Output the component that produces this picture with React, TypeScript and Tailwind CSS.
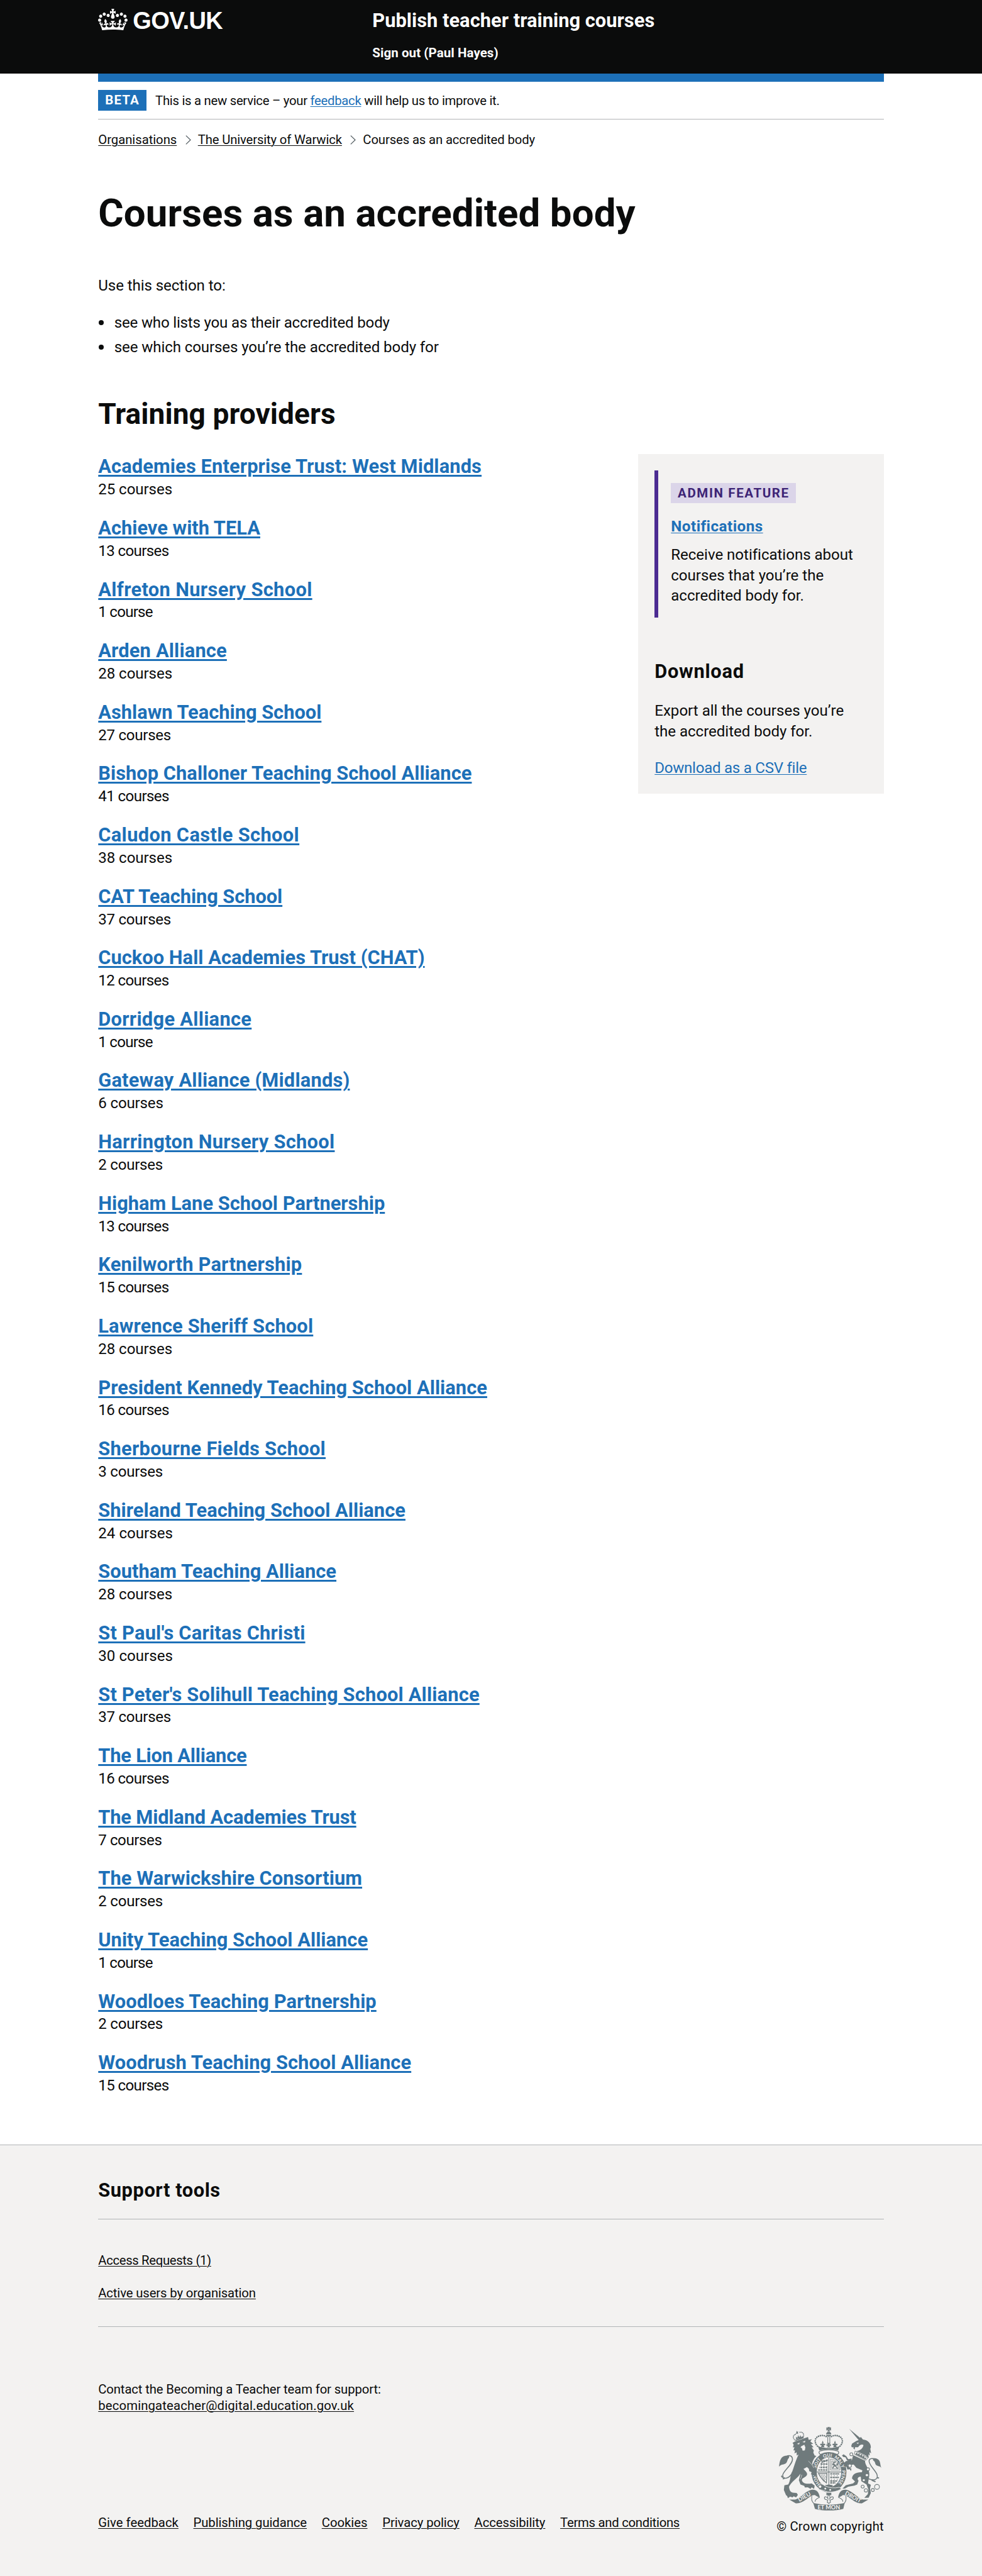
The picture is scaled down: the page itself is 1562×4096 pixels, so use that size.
import React, { useLayoutEffect, useRef, useState } from 'react'

type FitProps = { width: number; className?: string; children: React.ReactNode }

/** One line of text whose tracking is adjusted so that it sets to a fixed measure. */
function Fit({ width, className = '', children }: FitProps) {
  const ref = useRef<HTMLSpanElement>(null)
  const [spacing, setSpacing] = useState<number | null>(null)

  useLayoutEffect(() => {
    const el = ref.current
    if (!el || spacing !== null) return
    const natural = el.getBoundingClientRect().width
    setSpacing((width - natural) / (el.textContent ?? ' ').length)
  }, [width, spacing])

  return (
    <span
      ref={ref}
      className={'whitespace-nowrap [font-variant-ligatures:none] ' + className}
      style={spacing === null ? undefined : { letterSpacing: spacing + 'px' }}
    >
      {children}
    </span>
  )
}

const providers: { name: string; courses: number; width: number }[] = [
  { name: 'Academies Enterprise Trust: West Midlands', courses: 25, width: 609.8 },
  { name: 'Achieve with TELA', courses: 13, width: 257.7 },
  { name: 'Alfreton Nursery School', courses: 1, width: 340.4 },
  { name: 'Arden Alliance', courses: 28, width: 204.6 },
  { name: 'Ashlawn Teaching School', courses: 27, width: 355.1 },
  { name: 'Bishop Challoner Teaching School Alliance', courses: 41, width: 594.2 },
  { name: 'Caludon Castle School', courses: 38, width: 319.9 },
  { name: 'CAT Teaching School', courses: 37, width: 292.9 },
  { name: 'Cuckoo Hall Academies Trust (CHAT)', courses: 12, width: 519.3 },
  { name: 'Dorridge Alliance', courses: 1, width: 244 },
  { name: 'Gateway Alliance (Midlands)', courses: 6, width: 400.2 },
  { name: 'Harrington Nursery School', courses: 2, width: 376.2 },
  { name: 'Higham Lane School Partnership', courses: 13, width: 456 },
  { name: 'Kenilworth Partnership', courses: 15, width: 324.1 },
  { name: 'Lawrence Sheriff School', courses: 28, width: 342 },
  { name: 'President Kennedy Teaching School Alliance', courses: 16, width: 618.7 },
  { name: 'Sherbourne Fields School', courses: 3, width: 361.8 },
  { name: 'Shireland Teaching School Alliance', courses: 24, width: 488.7 },
  { name: 'Southam Teaching Alliance', courses: 28, width: 378.8 },
  { name: "St Paul's Caritas Christi", courses: 30, width: 329.3 },
  { name: "St Peter's Solihull Teaching School Alliance", courses: 37, width: 606.5 },
  { name: 'The Lion Alliance', courses: 16, width: 236.2 },
  { name: 'The Midland Academies Trust', courses: 7, width: 410.4 },
  { name: 'The Warwickshire Consortium', courses: 2, width: 419.8 },
  { name: 'Unity Teaching School Alliance', courses: 1, width: 428.9 },
  { name: 'Woodloes Teaching Partnership', courses: 2, width: 442.5 },
  { name: 'Woodrush Teaching School Alliance', courses: 15, width: 497.9 },
]

const countWidths: Record<number, number> = {
  1: 86.6, 2: 102.8, 3: 102.8, 6: 103.5, 7: 101.2, 12: 112.2, 13: 112.2, 15: 112.2, 16: 112.6,
  24: 118.8, 25: 117.8, 27: 115.8, 28: 117.8, 30: 118.8, 37: 115.8, 38: 117.8, 41: 112.6,
}

const footerLinks: [string, number][] = [
  ['Give feedback', 127.6],
  ['Publishing guidance', 180.5],
  ['Cookies', 72.8],
  ['Privacy policy', 122.6],
  ['Accessibility', 112.9],
  ['Terms and conditions', 190],
]

const thinLink = 'underline decoration-[1.3px] underline-offset-[1.6px]'

function Crown() {
  return (
    <svg viewBox="0 0 132 97" className="mt-[13.7px] h-[34.5px] w-[46.9px]" fill="currentColor">
      <path
        fillRule="evenodd"
        d="M25 30.2c3.5 1.5 7.7-.2 9.1-3.7 1.5-3.6-.2-7.8-3.9-9.2-3.6-1.4-7.6.3-9.1 3.9-1.4 3.5.3 7.5 3.9 9zM9 39.5c3.6 1.5 7.8-.2 9.2-3.7 1.5-3.6-.2-7.8-3.9-9.1-3.6-1.5-7.6.2-9.1 3.8-1.4 3.5.3 7.5 3.8 9zM4.4 57.2c3.5 1.5 7.7-.2 9.1-3.8 1.5-3.6-.2-7.7-3.9-9.1-3.5-1.5-7.6.3-9.1 3.8-1.4 3.5.3 7.6 3.9 9.1zm38.3-21.4c3.5 1.5 7.7-.2 9.1-3.8 1.5-3.6-.2-7.7-3.9-9.1-3.6-1.5-7.6.3-9.1 3.8-1.3 3.6.4 7.7 3.9 9.1zm64.4-5.6c-3.6 1.5-7.8-.2-9.1-3.7-1.5-3.6.2-7.8 3.8-9.2 3.6-1.4 7.7.3 9.2 3.9 1.3 3.5-.4 7.5-3.9 9zm15.9 9.3c-3.6 1.5-7.7-.2-9.1-3.7-1.5-3.6.2-7.8 3.7-9.1 3.6-1.5 7.7.2 9.2 3.8 1.5 3.5-.3 7.5-3.8 9zm4.7 17.7c-3.6 1.5-7.8-.2-9.2-3.8-1.5-3.6.2-7.7 3.9-9.1 3.6-1.5 7.7.3 9.2 3.8 1.3 3.5-.4 7.6-3.9 9.1zM89.3 35.8c-3.6 1.5-7.8-.2-9.2-3.8-1.4-3.6.2-7.7 3.9-9.1 3.6-1.5 7.7.3 9.2 3.8 1.4 3.6-.3 7.7-3.9 9.1zM69.7 17.7l8.9 4.7V9.3l-8.9 2.8c-.2-.3-.5-.6-.9-.9L72.4 0H59.6l3.5 11.2c-.3.3-.6.5-.9.9l-8.8-2.8v13.1l8.8-4.7c.3.3.6.7.9.9l-5 15.4v.1c-.2.8-.4 1.6-.4 2.4 0 4.1 3.1 7.5 7 8.1h.2c.3 0 .7.1 1 .1.4 0 .7 0 1-.1h.2c4-.6 7.1-4.1 7.1-8.1 0-.8-.1-1.7-.4-2.4V34l-5.1-15.4c.4-.2.7-.6 1-.9zM66 92.8c16.9 0 32.8 1.1 47.1 3.2 4-16.9 8.9-26.7 14-33.5l-9.6-3.4c1 4.9 1.1 7.2 0 10.2-1.5-1.4-3-4.3-4.2-8.7L108.6 76c2.8-2 5-3.2 7.5-3.3-4.4 9.4-10 11.9-13.6 11.2-4.3-.8-6.3-4.6-5.6-7.9 1-4.7 5.7-5.9 8-.5 4.3-8.7-3-11.4-7.6-8.8 7.1-7.2 7.9-13.5 2.1-21.1-8 6.1-8.1 12.3-4.5 20.8-4.7-5.4-12.1-2.5-9.5 6.2 3.4-5.2 7.9-2 7.2 3.1-.6 4.3-6.4 7.8-13.5 7.2-10.3-.9-10.9-8-11.2-13.8 2.5-.5 7.1 1.8 11 7.3L80.2 60c-4.1 4.4-8 5.3-12.3 5.4 1.4-4.4 8-11.6 8-11.6H55.5s6.4 7.2 7.9 11.6c-4.2-.1-8-1-12.3-5.4l1.4 16.4c3.9-5.5 8.5-7.7 10.9-7.3-.3 5.8-.9 12.8-11.1 13.8-7.2.6-12.9-2.9-13.5-7.2-.7-5 3.8-8.3 7.1-3.1 2.7-8.7-4.6-11.6-9.4-6.2 3.7-8.5 3.6-14.7-4.6-20.8-5.8 7.6-5 13.9 2.2 21.1-4.7-2.6-11.9.1-7.7 8.8 2.3-5.5 7.1-4.2 8.1.5.7 3.3-1.3 7.1-5.7 7.9-3.5.7-9-1.8-13.5-11.2 2.5.1 4.7 1.3 7.5 3.3l-4.7-15.4c-1.2 4.4-2.7 7.2-4.3 8.7-1.1-3-.9-5.3 0-10.2l-9.5 3.4c5 6.9 9.9 16.7 14 33.5 14.8-2.1 30.8-3.2 47.7-3.2z"
      />
    </svg>
  )
}

function Chevron() {
  return (
    <svg viewBox="0 0 9 15" className="mt-[5.8px] mr-[11px] ml-[13.5px] h-[15px] w-[9px]" fill="none">
      <path d="M0.8 0.6 8 7.5 0.8 14.4" stroke="#505a5f" strokeWidth="1.2" />
    </svg>
  )
}

function Crest() {
  const ink = '#6f7a7c'
  const paper = '#f3f2f1'
  const lettering = { fill: paper, fontFamily: 'Lato, sans-serif', fontWeight: 700, textAnchor: 'middle' as const }
  return (
    <svg viewBox="132 90 750 612" className="ml-[3.9px] h-[132.8px] w-[162.7px]">
      {/* garter */}
      <ellipse cx="499" cy="421" rx="109" ry="128" fill="none" stroke={ink} strokeWidth="38" />
      <path id="garter" d="M499 534 A96 113 0 0 1 499 308 A96 113 0 0 1 499 534" fill="none" />
      <g {...lettering} fontSize="33">
        <text><textPath href="#garter" startOffset="108">HON</textPath></text>
        <text><textPath href="#garter" startOffset="228">SOIT</textPath></text>
        <text><textPath href="#garter" startOffset="318">QUI</textPath></text>
        <text><textPath href="#garter" startOffset="402">MAL</textPath></text>
        <text><textPath href="#garter" startOffset="452">Y</textPath></text>
        <text><textPath href="#garter" startOffset="530">PENSE</textPath></text>
      </g>

      {/* shield quarters */}
      <g fill="none" stroke={ink}>
        <path d="M498 315V520M410 420H588" strokeWidth="5" />
        <path d="M488 338H442M490 332C470 340 460 345 440 352M488 362H434M486 386H428M488 406H420" strokeWidth="9" strokeDasharray="14 4" />
        <path d="M484 330V410M462 340V412M442 352V410" strokeWidth="4" strokeDasharray="9 6" />
        <path d="M510 325C545 328 575 350 580 406H510ZM520 338V396H568C566 362 545 344 520 338Z" strokeWidth="3.5" />
        <path d="M526 392L540 372 524 362M540 372L532 352 548 344M540 372L560 368 566 350M544 374L562 394" strokeWidth="8" />
        <path d="M422 430C430 432 450 436 484 430L480 500C470 492 440 470 422 430Z" strokeWidth="6" />
        <path d="M440 440L470 490M452 440L474 478M464 440L478 462M430 446L462 490" strokeWidth="3.5" />
        <path d="M508 434H574M508 460H572M508 486H562M508 500H548" strokeWidth="9" strokeDasharray="14 4" />
        <path d="M516 428V506M538 428V500M560 428V486" strokeWidth="4" strokeDasharray="9 6" />
      </g>
      <path d="M468 517L498 512 528 517 520 530 498 534 478 530Z" fill={ink} />

      {/* buckle and strap end */}
      <path d="M420 520Q430 500 455 512L470 522Q520 545 575 532L590 545Q540 572 490 566L445 552 425 548Z" fill={ink} stroke={paper} strokeWidth="4" />
      <circle cx="434" cy="527" r="12" fill={paper} stroke={ink} strokeWidth="5" />
      <circle cx="472" cy="542" r="7" fill={paper} />
      <circle cx="508" cy="551" r="7" fill={paper} />

      {/* imperial crown */}
      <path d="M418 230Q450 244 497 244T577 230L566 262Q497 245 428 262Z" fill={ink} />
      <path d="M428 284Q420 268 440 264Q497 252 556 264Q576 268 568 286L560 292Q497 262 436 292Z" fill={paper} stroke={ink} strokeWidth="6" />
      <g fill="none" stroke={ink} strokeWidth="12" strokeLinecap="round" strokeDasharray="0 14.4">
        <path d="M478 160C450 144 405 155 398 186C396 205 404 220 416 232" />
        <path d="M517 160C545 144 590 155 597 186C599 205 591 220 579 232" />
      </g>
      <path d="M497 100L486 90H509L497 100 514 92V116L497 108 509 122H486L497 108 480 116V92Z" fill={ink} />
      <path d="M478 144A19 19 0 0 1 516 144ZM478 149H516Q514 160 497 162Q480 160 478 149Z" fill={ink} />
      <path d="M490 164V206M505 164V206" stroke={ink} strokeWidth="5" />
      <path d="M483 206H511L501 220 513 214V232L501 226 508 240H486L493 226 481 232V214L493 220Z" fill={ink} />
      <path d="M453 190Q444 206 449 216Q438 206 433 220Q440 226 446 224L440 238H466L460 224Q468 226 473 220Q468 206 457 216Q462 206 453 190ZM543 190Q534 206 539 216Q528 206 523 220Q530 226 536 224L530 238H556L550 224Q558 226 563 220Q558 206 547 216Q552 206 543 190Z" fill={ink} />

      {/* lion */}
      <g fill="none" stroke={ink} strokeWidth="7">
        <path d="M232 420C212 470 158 480 160 442C164 412 238 360 231 322C228 300 210 296 190 303" />
        <path d="M150 448L160 462M160 470L174 466" strokeWidth="9" />
      </g>
      <path d="M208 300C180 300 160 302 148 322C136 340 136 360 132 382C146 364 162 368 178 360C196 352 190 330 206 316Z" fill={ink} />
      <path
        d="M232 206L250 196 345 164 350 184 374 180 362 196 384 214 366 216 386 238 372 240 388 262 384 278 394 300 407 302 390 322 378 346 376 362 404 396 410 446 390 452 386 438 366 438 372 422 354 414 352 398 338 384 312 398C324 412 342 424 338 440C330 460 302 462 300 478C302 500 330 512 372 504L394 520 390 544 372 532 364 544 344 532 322 534 318 522 290 512 278 480 290 432C268 466 222 492 206 528C208 552 216 568 234 572L262 574 271 588 258 606 240 598 232 606 214 600 198 612 192 596 184 590 168 552 172 518 200 512C214 490 214 462 222 438C244 382 248 352 276 292L262 300 262 276 246 284 250 262 238 262 246 238 234 240 240 220Z"
        fill={ink}
      />
      <path d="M264 214L284 204 280 218ZM304 200L326 190 322 204ZM296 232L318 220 326 240 322 262 306 264 300 246 290 240Z" fill={paper} />
      <path d="M348 340Q376 362 388 390M300 440Q296 462 288 474" stroke={paper} strokeWidth="3" fill="none" />
      <path d="M250 186L310 160 314 172 254 192Z" fill={ink} />
      <g fill="none" stroke={ink} strokeWidth="8" strokeLinecap="round" strokeDasharray="0 10">
        <path d="M246 184C232 166 234 146 262 142" />
        <path d="M312 160C318 140 304 122 280 130" />
      </g>
      <path d="M262 118L267 126 275 124 270 134 274 142 264 138 256 142 260 130ZM256 180L258 160 266 170 274 150 280 166 290 150 294 166 304 156 306 166Z" fill={ink} />

      {/* unicorn */}
      <path d="M647 104L736 178 720 190Z" fill={ink} />
      <path d="M662 230L668 212 700 192 718 186 732 163 748 182C784 186 806 208 806 240L802 250 808 284 796 274 798 300 788 290 790 318 770 300 700 266C730 264 748 244 752 222C738 214 724 222 712 238L690 238 688 256 676 244 682 236 668 240Z" fill={ink} />
      <path d="M700 208L718 204 712 214Z" fill={paper} />
      <path d="M690 266L786 314 770 334 686 290Z" fill={paper} stroke={ink} strokeWidth="4" />
      <path d="M696 286L704 274 710 292 722 282 726 300 740 290 744 308 756 300 760 318 774 312 768 328 692 290Z" fill={ink} />
      <path d="M676 296L764 338C760 360 784 386 792 416C800 446 788 470 786 504L806 514 800 540 806 574 790 608 758 610 784 582 788 548 774 512 736 488 732 454C708 456 704 472 716 484L706 512 686 520 640 528 616 542 598 542 622 518 676 504 690 490 668 468C668 436 700 420 740 422L744 408 700 390 664 346Z" fill={ink} />
      <path d="M672 336L624 340 606 356 612 372 628 384 634 402 652 400 660 414 664 396 642 384 636 368 680 366ZM664 322L640 326 626 304 606 290 594 300 604 310 620 312 632 336 666 344Z" fill={ink} />
      <g fill="none" stroke={ink} strokeWidth="7">
        <path d="M790 470C830 486 864 476 850 436C838 408 790 366 793 338C796 318 824 318 846 328" />
        <path d="M812 480L840 492M852 462L866 464" strokeWidth="9" />
      </g>
      <path d="M822 320C846 318 866 326 872 346C876 360 876 376 883 390C872 374 860 380 846 370C834 360 842 346 822 334Z" fill={ink} />
      <g fill="none" stroke={ink} strokeWidth="5">
        <circle cx="663" cy="290" r="11" />
        <circle cx="652" cy="374" r="12" fill={paper} />
        <circle cx="785" cy="400" r="11" fill={paper} />
        <circle cx="746" cy="527" r="11" />
        <circle cx="770" cy="555" r="12" />
        <circle cx="820" cy="552" r="11" />
        <circle cx="851" cy="529" r="18" />
      </g>
      <circle cx="777" cy="443" r="9" fill={paper} />
      <circle cx="754" cy="480" r="8" fill={paper} />
      <circle cx="648" cy="318" r="5" fill={paper} />

      {/* motto scroll */}
      <g fill={ink}>
        <path d="M208 622H250C290 612 330 556 374 550C410 546 426 572 432 606L412 598Q400 584 376 592L366 598C330 620 300 652 256 650Z" />
        <path d="M788 622H748C708 612 668 556 624 550C588 546 572 572 566 606L586 598Q598 584 622 592L632 598C668 620 698 652 740 650Z" />
        <path d="M384 648Q440 660 498 660T614 648L604 690Q560 702 498 702T396 690Z" />
      </g>
      <path d="M374 596C366 624 376 640 390 652M430 606Q392 622 398 638M400 590Q424 600 430 608M622 596C630 624 620 640 608 652M568 606Q606 622 600 638M596 590Q574 600 568 608" fill="none" stroke={ink} strokeWidth="5" />
      <g {...lettering} fontSize="42">
        <text transform="translate(325 614) rotate(-29)">DIEU</text>
        <text x="498" y="694">ET MON</text>
        <text transform="translate(669 616) rotate(29)">DROIT</text>
      </g>

      {/* pendant fleur-de-lis */}
      <path d="M480 572H516V590H480Z" fill={ink} />
      <path d="M498 584Q484 604 494 622Q484 596 466 604Q462 622 480 622L490 628 486 642 498 650 510 642 506 628 516 622Q534 622 530 604Q512 596 502 622Q512 604 498 584Z" fill={paper} stroke={ink} strokeWidth="5" />
    </svg>
  )
}

function Header() {
  return (
    <header className="h-[117px] bg-[#0b0c0c] text-white">
      <div className="mx-auto flex w-[1249.5px]">
        <div className="flex w-[436px] gap-[8px]">
          <Crown />
          <div className="mt-[12.6px] font-['Liberation_Sans'] text-[38px] leading-[40px] font-bold">
            <Fit width={143}>GOV.UK</Fit>
          </div>
        </div>
        <div className="pt-[16px] font-bold">
          <div className="text-[30.8px] leading-[33px]">
            <Fit width={449}>Publish teacher training courses</Fit>
          </div>
          <div className="mt-[22.1px] text-[20.5px] leading-[26px]">
            <Fit width={200.5}>Sign out (Paul Hayes)</Fit>
          </div>
        </div>
      </div>
    </header>
  )
}

function PhaseBanner() {
  return (
    <div className="flex h-[60px] items-start border-b border-[#b1b4b6] pt-[13.2px] text-[20.3px]">
      <strong className="mr-[14px] h-[32.5px] w-[76.8px] bg-[#1d70b8] pl-[11px] text-[20.5px] leading-[33px] font-bold text-white">
        <Fit width={54.5}>BETA</Fit>
      </strong>
      <p className="pt-[4.4px] leading-[25px]">
        <Fit width={547.5}>
          This is a new service – your <a className={'text-[#1d70b8] ' + thinLink}>feedback</a> will help us to improve it.
        </Fit>
      </p>
    </div>
  )
}

function Breadcrumbs() {
  return (
    <nav className="mt-[19.1px] flex h-[26px] text-[20.3px] leading-[26px]">
      <Fit width={125} className={thinLink}>Organisations</Fit>
      <Chevron />
      <Fit width={229.1} className={thinLink}>The University of Warwick</Fit>
      <Chevron />
      <Fit width={273.6}>Courses as an accredited body</Fit>
    </nav>
  )
}

function Bullet({ width, children }: FitProps) {
  return (
    <li className="flex gap-[16.5px]">
      <span className="mt-[12.2px] ml-[1px] size-[8px] rounded-full bg-[#0b0c0c]" />
      <Fit width={width}>{children}</Fit>
    </li>
  )
}

function ProviderList() {
  return (
    <ul>
      {providers.map(p => (
        <li key={p.name} className="mb-[24.72px] h-[72.9px]">
          <h3 className="text-[30.8px] leading-[39px] font-bold text-[#1d70b8]">
            <Fit width={p.width} className="underline decoration-[2.6px] underline-offset-[2.6px]">
              {p.name}
            </Fit>
          </h3>
          <p className="mt-[0.9px] text-[24.1px] leading-[33px]">
            <Fit width={countWidths[p.courses]}>{p.courses + (p.courses === 1 ? ' course' : ' courses')}</Fit>
          </p>
        </li>
      ))}
    </ul>
  )
}

function Sidebar() {
  return (
    <aside className="h-[540.1px] w-[390.5px] bg-[#f3f2f1] pt-[26px] pl-[26px] text-[24.1px] leading-[32.55px]">
      <section className="h-[234px] border-l-[6.5px] border-[#4c2c92] pt-[19.5px] pl-[20px]">
        <strong className="block h-[32.5px] w-[199px] bg-[#dbd5e9] pl-[10.8px] text-[20.5px] leading-[33px] font-bold text-[#3d2375]">
          <Fit width={177.7}>ADMIN FEATURE</Fit>
        </strong>
        <h3 className="mt-[19.3px] text-[24.3px] leading-[33px] font-bold text-[#1d70b8]">
          <Fit width={146.4} className={thinLink}>Notifications</Fit>
        </h3>
        <p className="mt-[13.6px] flex flex-col items-start">
          <Fit width={289.6}>Receive notifications about</Fit>
          <Fit width={243}>courses that you’re the</Fit>
          <Fit width={211.5}>accredited body for.</Fit>
        </p>
      </section>
      <h2 className="mt-[65.3px] text-[30.8px] leading-[39px] font-bold">
        <Fit width={142.5}>Download</Fit>
      </h2>
      <p className="mt-[27.5px] flex flex-col items-start">
        <Fit width={301}>Export all the courses you’re</Fit>
        <Fit width={251}>the accredited body for.</Fit>
      </p>
      <p className="mt-[25.4px] text-[#1d70b8]">
        <Fit width={242} className={thinLink}>Download as a CSV file</Fit>
      </p>
    </aside>
  )
}

function Footer() {
  return (
    <footer className="mt-[52px] h-[686px] border-t border-[#b1b4b6] bg-[#f3f2f1] pt-[52.4px]">
      <div className="mx-auto w-[1249.5px] text-[20.3px] leading-[26px]">
        <h2 className="text-[30.8px] leading-[39px] font-bold">
          <Fit width={194.5}>Support tools</Fit>
        </h2>
        <div className="mt-[26.1px] flex h-[171.5px] flex-col items-start gap-[26.1px] border-y border-[#b1b4b6] pt-[51.9px]">
          <Fit width={179.6} className={thinLink}>Access Requests (1)</Fit>
          <Fit width={250.6} className={thinLink}>Active users by organisation</Fit>
        </div>
        <div className="flex items-start justify-between pt-[85.8px]">
          <div>
            <p className="flex flex-col items-start">
              <Fit width={449.5}>Contact the Becoming a Teacher team for support:</Fit>
              <Fit width={406.8} className={thinLink}>becomingateacher@digital.education.gov.uk</Fit>
            </p>
            <nav className="mt-[160.1px] flex gap-[23.7px]">
              {footerLinks.map(([label, width]) => (
                <Fit key={label} width={width} className={thinLink}>{label}</Fit>
              ))}
            </nav>
          </div>
          <div className="w-[170.5px] pt-[73.3px]">
            <Crest />
            <p className="mt-[12.5px]">
              <Fit width={170.5}>© Crown copyright</Fit>
            </p>
          </div>
        </div>
      </div>
    </footer>
  )
}

export default function App() {
  return (
    <div className="h-[4096px] overflow-hidden bg-white font-['Roboto',sans-serif] text-[#0b0c0c]">
      <Header />
      <div className="mx-auto w-[1249.5px]">
        <div className="h-[13px] bg-[#1d70b8]" />
        <PhaseBanner />
        <Breadcrumbs />
        <main>
          <h1 className="mt-[72.4px] text-[61.8px] leading-[65px] font-bold">
            <Fit width={854.5}>Courses as an accredited body</Fit>
          </h1>
          <p className="mt-[65.5px] text-[24.1px] leading-[33px]">
            <Fit width={202.4}>Use this section to:</Fit>
          </p>
          <ul className="mt-[25.6px] flex flex-col gap-[6.1px] text-[24.1px] leading-[33px]">
            <Bullet width={438}>see who lists you as their accredited body</Bullet>
            <Bullet width={516}>see which courses you’re the accredited body for</Bullet>
          </ul>
          <h2 className="mt-[65.2px] text-[46.1px] leading-[49px] font-bold">
            <Fit width={377.5}>Training providers</Fit>
          </h2>
          <div className="mt-[39.5px] flex items-start justify-between">
            <ProviderList />
            <Sidebar />
          </div>
        </main>
      </div>
      <Footer />
    </div>
  )
}
